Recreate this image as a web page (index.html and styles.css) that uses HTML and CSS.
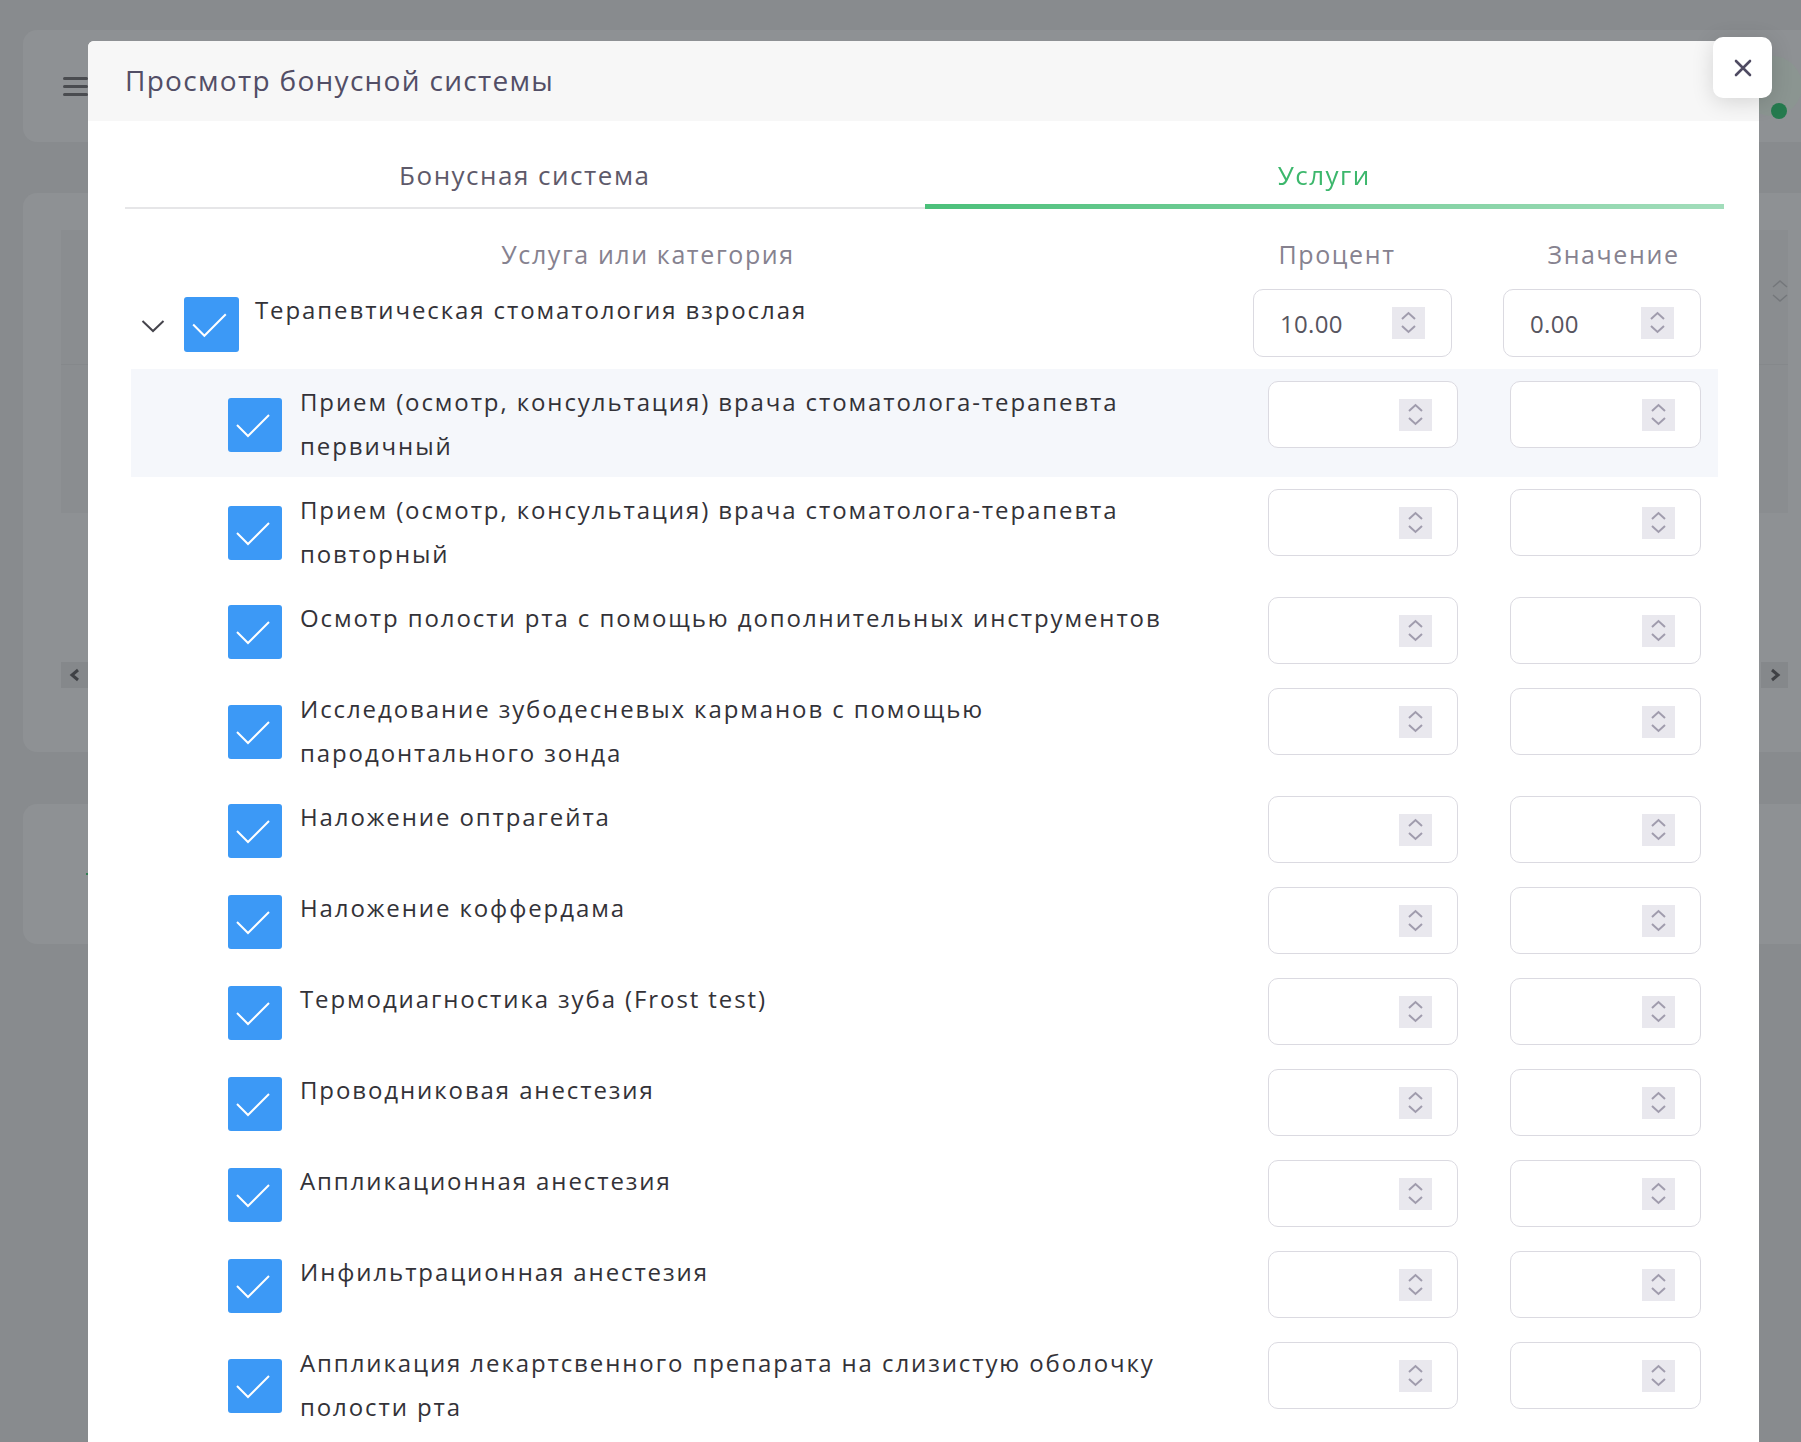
FILE: index.html
```html
<!DOCTYPE html>
<html lang="ru">
<head>
<meta charset="utf-8">
<title>Просмотр бонусной системы</title>
<link rel="stylesheet" href="styles.css">
</head>
<body>
<div class="page">
  <header class="app-bar">
    <span class="burger"><i></i><i></i><i></i></span>
    <span class="avatar"><span class="avatar-dot"></span></span>
  </header>
  <section class="card card-main">
    <div class="bg-table">
      <div class="bg-table-head">
        <svg class="bg-sort" width="16" height="30" viewBox="0 0 16 30"><path d="M1 11 L8 5 L15 11 M1 19 L8 25 L15 19" stroke="#74777b" stroke-width="1.5" fill="none"/></svg>
      </div>
      <div class="bg-table-row"></div>
    </div>
    <div class="bg-pager">
      <span class="pager-btn"><svg width="12" height="14" viewBox="0 0 12 14"><path d="M9 2 L3 7 L9 12" stroke="#3f4145" stroke-width="3" fill="none"/></svg></span>
      <span class="pager-btn"><svg width="12" height="14" viewBox="0 0 12 14"><path d="M3 2 L9 7 L3 12" stroke="#3f4145" stroke-width="3" fill="none"/></svg></span>
    </div>
  </section>
  <section class="card card-small"><span class="bg-mark"></span></section>
</div>

<div class="modal">
  <div class="modal-head">
    <h2 class="modal-title">Просмотр бонусной системы</h2>
  </div>
  <button class="modal-close" type="button" aria-label="Закрыть">
    <svg width="18" height="18" viewBox="0 0 18 18"><path d="M2 2 L16 16 M16 2 L2 16" stroke="#4f4b62" stroke-width="2.6" stroke-linecap="round" fill="none"/></svg>
  </button>
  <div class="modal-body">
    <nav class="tabs">
      <div class="tab">Бонусная система</div>
      <div class="tab tab-active">Услуги</div>
    </nav>

    <div class="svc-table">
      <div class="svc-head">
        <div class="head-name">Услуга или категория</div>
        <div class="head-pct">Процент</div>
        <div class="head-val">Значение</div>
      </div>

      <div class="row row-parent">
        <span class="expander">
          <svg width="24" height="14" viewBox="0 0 24 14"><path d="M1.5 2 L12 12 L22.5 2" stroke="#45444c" stroke-width="2" fill="none"/></svg>
        </span>
        <span class="check"><svg width="55" height="55" viewBox="0 0 54 54"><path d="M9 27 L20 38 L41 17" stroke="#fff" stroke-width="2" fill="none"/></svg></span>
        <div class="name">Терапевтическая стоматология взрослая</div>
        <div class="inputs">
          <div class="num num-p"><span class="num-val">10.00</span><span class="spin"><svg width="33" height="32" viewBox="0 0 33 32"><path d="M10 12 L16.5 6 L23 12 M10 19 L16.5 25 L23 19" stroke="#a09cad" stroke-width="2" fill="none"/></svg></span></div>
          <div class="num num-p"><span class="num-val">0.00</span><span class="spin"><svg width="33" height="32" viewBox="0 0 33 32"><path d="M10 12 L16.5 6 L23 12 M10 19 L16.5 25 L23 19" stroke="#a09cad" stroke-width="2" fill="none"/></svg></span></div>
        </div>
      </div>

      <div class="row row-child row-hover">
        <span class="check"><svg width="54" height="54" viewBox="0 0 54 54"><path d="M9 27 L20 38 L41 17" stroke="#fff" stroke-width="2" fill="none"/></svg></span>
        <div class="name">Прием (осмотр, консультация) врача стоматолога-терапевта первичный</div>
        <div class="inputs">
          <div class="num num-c"><span class="num-val"></span><span class="spin"><svg width="33" height="32" viewBox="0 0 33 32"><path d="M10 12 L16.5 6 L23 12 M10 19 L16.5 25 L23 19" stroke="#a09cad" stroke-width="2" fill="none"/></svg></span></div>
          <div class="num num-c num-c2"><span class="num-val"></span><span class="spin"><svg width="33" height="32" viewBox="0 0 33 32"><path d="M10 12 L16.5 6 L23 12 M10 19 L16.5 25 L23 19" stroke="#a09cad" stroke-width="2" fill="none"/></svg></span></div>
        </div>
      </div>

      <div class="row row-child">
        <span class="check"><svg width="54" height="54" viewBox="0 0 54 54"><path d="M9 27 L20 38 L41 17" stroke="#fff" stroke-width="2" fill="none"/></svg></span>
        <div class="name">Прием (осмотр, консультация) врача стоматолога-терапевта повторный</div>
        <div class="inputs">
          <div class="num num-c"><span class="num-val"></span><span class="spin"><svg width="33" height="32" viewBox="0 0 33 32"><path d="M10 12 L16.5 6 L23 12 M10 19 L16.5 25 L23 19" stroke="#a09cad" stroke-width="2" fill="none"/></svg></span></div>
          <div class="num num-c num-c2"><span class="num-val"></span><span class="spin"><svg width="33" height="32" viewBox="0 0 33 32"><path d="M10 12 L16.5 6 L23 12 M10 19 L16.5 25 L23 19" stroke="#a09cad" stroke-width="2" fill="none"/></svg></span></div>
        </div>
      </div>

      <div class="row row-child">
        <span class="check"><svg width="54" height="54" viewBox="0 0 54 54"><path d="M9 27 L20 38 L41 17" stroke="#fff" stroke-width="2" fill="none"/></svg></span>
        <div class="name">Осмотр полости рта с помощью дополнительных инструментов</div>
        <div class="inputs">
          <div class="num num-c"><span class="num-val"></span><span class="spin"><svg width="33" height="32" viewBox="0 0 33 32"><path d="M10 12 L16.5 6 L23 12 M10 19 L16.5 25 L23 19" stroke="#a09cad" stroke-width="2" fill="none"/></svg></span></div>
          <div class="num num-c num-c2"><span class="num-val"></span><span class="spin"><svg width="33" height="32" viewBox="0 0 33 32"><path d="M10 12 L16.5 6 L23 12 M10 19 L16.5 25 L23 19" stroke="#a09cad" stroke-width="2" fill="none"/></svg></span></div>
        </div>
      </div>

      <div class="row row-child">
        <span class="check"><svg width="54" height="54" viewBox="0 0 54 54"><path d="M9 27 L20 38 L41 17" stroke="#fff" stroke-width="2" fill="none"/></svg></span>
        <div class="name">Исследование зубодесневых карманов с помощью пародонтального зонда</div>
        <div class="inputs">
          <div class="num num-c"><span class="num-val"></span><span class="spin"><svg width="33" height="32" viewBox="0 0 33 32"><path d="M10 12 L16.5 6 L23 12 M10 19 L16.5 25 L23 19" stroke="#a09cad" stroke-width="2" fill="none"/></svg></span></div>
          <div class="num num-c num-c2"><span class="num-val"></span><span class="spin"><svg width="33" height="32" viewBox="0 0 33 32"><path d="M10 12 L16.5 6 L23 12 M10 19 L16.5 25 L23 19" stroke="#a09cad" stroke-width="2" fill="none"/></svg></span></div>
        </div>
      </div>

      <div class="row row-child">
        <span class="check"><svg width="54" height="54" viewBox="0 0 54 54"><path d="M9 27 L20 38 L41 17" stroke="#fff" stroke-width="2" fill="none"/></svg></span>
        <div class="name">Наложение оптрагейта</div>
        <div class="inputs">
          <div class="num num-c"><span class="num-val"></span><span class="spin"><svg width="33" height="32" viewBox="0 0 33 32"><path d="M10 12 L16.5 6 L23 12 M10 19 L16.5 25 L23 19" stroke="#a09cad" stroke-width="2" fill="none"/></svg></span></div>
          <div class="num num-c num-c2"><span class="num-val"></span><span class="spin"><svg width="33" height="32" viewBox="0 0 33 32"><path d="M10 12 L16.5 6 L23 12 M10 19 L16.5 25 L23 19" stroke="#a09cad" stroke-width="2" fill="none"/></svg></span></div>
        </div>
      </div>

      <div class="row row-child">
        <span class="check"><svg width="54" height="54" viewBox="0 0 54 54"><path d="M9 27 L20 38 L41 17" stroke="#fff" stroke-width="2" fill="none"/></svg></span>
        <div class="name">Наложение коффердама</div>
        <div class="inputs">
          <div class="num num-c"><span class="num-val"></span><span class="spin"><svg width="33" height="32" viewBox="0 0 33 32"><path d="M10 12 L16.5 6 L23 12 M10 19 L16.5 25 L23 19" stroke="#a09cad" stroke-width="2" fill="none"/></svg></span></div>
          <div class="num num-c num-c2"><span class="num-val"></span><span class="spin"><svg width="33" height="32" viewBox="0 0 33 32"><path d="M10 12 L16.5 6 L23 12 M10 19 L16.5 25 L23 19" stroke="#a09cad" stroke-width="2" fill="none"/></svg></span></div>
        </div>
      </div>

      <div class="row row-child">
        <span class="check"><svg width="54" height="54" viewBox="0 0 54 54"><path d="M9 27 L20 38 L41 17" stroke="#fff" stroke-width="2" fill="none"/></svg></span>
        <div class="name">Термодиагностика зуба (Frost test)</div>
        <div class="inputs">
          <div class="num num-c"><span class="num-val"></span><span class="spin"><svg width="33" height="32" viewBox="0 0 33 32"><path d="M10 12 L16.5 6 L23 12 M10 19 L16.5 25 L23 19" stroke="#a09cad" stroke-width="2" fill="none"/></svg></span></div>
          <div class="num num-c num-c2"><span class="num-val"></span><span class="spin"><svg width="33" height="32" viewBox="0 0 33 32"><path d="M10 12 L16.5 6 L23 12 M10 19 L16.5 25 L23 19" stroke="#a09cad" stroke-width="2" fill="none"/></svg></span></div>
        </div>
      </div>

      <div class="row row-child">
        <span class="check"><svg width="54" height="54" viewBox="0 0 54 54"><path d="M9 27 L20 38 L41 17" stroke="#fff" stroke-width="2" fill="none"/></svg></span>
        <div class="name">Проводниковая анестезия</div>
        <div class="inputs">
          <div class="num num-c"><span class="num-val"></span><span class="spin"><svg width="33" height="32" viewBox="0 0 33 32"><path d="M10 12 L16.5 6 L23 12 M10 19 L16.5 25 L23 19" stroke="#a09cad" stroke-width="2" fill="none"/></svg></span></div>
          <div class="num num-c num-c2"><span class="num-val"></span><span class="spin"><svg width="33" height="32" viewBox="0 0 33 32"><path d="M10 12 L16.5 6 L23 12 M10 19 L16.5 25 L23 19" stroke="#a09cad" stroke-width="2" fill="none"/></svg></span></div>
        </div>
      </div>

      <div class="row row-child">
        <span class="check"><svg width="54" height="54" viewBox="0 0 54 54"><path d="M9 27 L20 38 L41 17" stroke="#fff" stroke-width="2" fill="none"/></svg></span>
        <div class="name">Аппликационная анестезия</div>
        <div class="inputs">
          <div class="num num-c"><span class="num-val"></span><span class="spin"><svg width="33" height="32" viewBox="0 0 33 32"><path d="M10 12 L16.5 6 L23 12 M10 19 L16.5 25 L23 19" stroke="#a09cad" stroke-width="2" fill="none"/></svg></span></div>
          <div class="num num-c num-c2"><span class="num-val"></span><span class="spin"><svg width="33" height="32" viewBox="0 0 33 32"><path d="M10 12 L16.5 6 L23 12 M10 19 L16.5 25 L23 19" stroke="#a09cad" stroke-width="2" fill="none"/></svg></span></div>
        </div>
      </div>

      <div class="row row-child">
        <span class="check"><svg width="54" height="54" viewBox="0 0 54 54"><path d="M9 27 L20 38 L41 17" stroke="#fff" stroke-width="2" fill="none"/></svg></span>
        <div class="name">Инфильтрационная анестезия</div>
        <div class="inputs">
          <div class="num num-c"><span class="num-val"></span><span class="spin"><svg width="33" height="32" viewBox="0 0 33 32"><path d="M10 12 L16.5 6 L23 12 M10 19 L16.5 25 L23 19" stroke="#a09cad" stroke-width="2" fill="none"/></svg></span></div>
          <div class="num num-c num-c2"><span class="num-val"></span><span class="spin"><svg width="33" height="32" viewBox="0 0 33 32"><path d="M10 12 L16.5 6 L23 12 M10 19 L16.5 25 L23 19" stroke="#a09cad" stroke-width="2" fill="none"/></svg></span></div>
        </div>
      </div>

      <div class="row row-child">
        <span class="check"><svg width="54" height="54" viewBox="0 0 54 54"><path d="M9 27 L20 38 L41 17" stroke="#fff" stroke-width="2" fill="none"/></svg></span>
        <div class="name">Аппликация лекартсвенного препарата на слизистую оболочку полости рта</div>
        <div class="inputs">
          <div class="num num-c"><span class="num-val"></span><span class="spin"><svg width="33" height="32" viewBox="0 0 33 32"><path d="M10 12 L16.5 6 L23 12 M10 19 L16.5 25 L23 19" stroke="#a09cad" stroke-width="2" fill="none"/></svg></span></div>
          <div class="num num-c num-c2"><span class="num-val"></span><span class="spin"><svg width="33" height="32" viewBox="0 0 33 32"><path d="M10 12 L16.5 6 L23 12 M10 19 L16.5 25 L23 19" stroke="#a09cad" stroke-width="2" fill="none"/></svg></span></div>
        </div>
      </div>
    </div>
  </div>
</div>
</body>
</html>
```

FILE: styles.css
```css
* { box-sizing: border-box; }

html, body {
  margin: 0;
  padding: 0;
  height: 100%;
  overflow: hidden;
}

body {
  background: #888b8e;
  font-family: "Open Sans", "Noto Sans", sans-serif;
  color: #333238;
}

/* ---------- page behind the overlay (already dimmed) ---------- */
.page {
  padding: 30px 0 0 23px;
  width: 1860px;
}

.app-bar {
  height: 112px;
  border-radius: 14px;
  background: #8e9194;
  display: flex;
  align-items: center;
  padding-left: 40px;
}

.burger {
  display: flex;
  flex-direction: column;
  gap: 5px;
  width: 25px;
}
.burger i {
  display: block;
  height: 3px;
  border-radius: 2px;
  background: #4a4c50;
}

.avatar {
  margin-left: 1654px;
  width: 60px;
  height: 60px;
  border-radius: 50%;
  background: #8b9591;
  position: relative;
}
.avatar-dot {
  position: absolute;
  left: 29px;
  top: 47px;
  width: 16px;
  height: 16px;
  border-radius: 50%;
  background: #257a4e;
}

.card {
  border-radius: 14px;
  background: #8e9194;
  width: 1803px;
}

.card-main {
  margin-top: 51px;
  height: 559px;
  padding: 37px 38px 0 38px;
}

.bg-table {
  height: 283px;
  background: #8a8d90;
}
.bg-table-head {
  height: 135px;
  border-bottom: 1px solid #85888b;
  display: flex;
  justify-content: flex-end;
  align-items: flex-start;
  padding: 46px 0 0 0;
}
.bg-sort {
  display: block;
}

.bg-pager {
  display: flex;
  justify-content: space-between;
  margin-top: 149px;
}
.pager-btn {
  width: 27px;
  height: 26px;
  background: #85888b;
  display: flex;
  align-items: center;
  justify-content: center;
}

.card-small {
  margin-top: 52px;
  height: 140px;
  padding: 69px 0 0 63px;
}
.bg-mark {
  display: block;
  width: 8px;
  height: 2px;
  background: #2f7d52;
}

/* ---------- modal ---------- */
.modal {
  position: fixed;
  left: 88px;
  top: 41px;
  width: 1671px;
  height: 1420px;
  background: #fff;
  border-radius: 6px 6px 0 0;
}

.modal-head {
  height: 80px;
  background: #f7f7f7;
  border-radius: 6px 6px 0 0;
  display: flex;
  align-items: center;
  padding: 0 0 3px 37px;
}

.modal-title {
  margin: 0;
  font-weight: 400;
  font-size: 28px;
  letter-spacing: 1.3px;
  color: #524e66;
}

.modal-close {
  position: absolute;
  top: -4px;
  right: -13px;
  width: 59px;
  height: 61px;
  border: none;
  border-radius: 10px;
  background: #fff;
  box-shadow: 0 4px 22px rgba(0, 0, 0, 0.14);
  display: flex;
  align-items: center;
  justify-content: center;
  padding: 0;
}

.modal-body {
  padding: 0 35px 0 37px;
}

.tabs {
  display: flex;
}
.tab {
  flex: 1;
  text-align: center;
  font-size: 26px;
  letter-spacing: 1.5px;
  color: #5e5a6a;
  line-height: 34px;
  padding: 37px 0 15px;
  border-bottom: 2px solid #e6e6e8;
  position: relative;
}
.tab-active {
  color: #3cb76c;
  border-bottom-color: transparent;
}
.tab-active::after {
  content: "";
  position: absolute;
  left: 0;
  right: 0;
  bottom: -2px;
  height: 5px;
  background: linear-gradient(90deg, #4bc07a 0%, #7fd1a0 55%, #a2ddbb 100%);
}

/* ---------- table ---------- */
.svc-table {
  margin: 0 6px;
}

.svc-head {
  display: flex;
  padding: 28px 0 6px;
  line-height: 34px;
  font-size: 25px;
  letter-spacing: 1.6px;
  color: #86828f;
}
.head-name { width: 1034px; text-align: center; }
.head-pct { width: 344px; text-align: center; }
.head-val { flex: 1; text-align: center; }

.row {
  display: flex;
  align-items: flex-start;
  padding: 12px 17px 9px 0;
}

.row-hover {
  background: #f5f7fb;
}

.expander {
  align-self: center;
  width: 26px;
  margin-left: 9px;
  margin-right: 18px;
  display: flex;
  justify-content: center;
  padding-top: 2px;
}

.check {
  align-self: center;
  flex: none;
  width: 54px;
  height: 54px;
  border-radius: 3px;
  background: #3c99f6;
  display: flex;
}
.row-parent .check {
  width: 55px;
  height: 55px;
  margin-right: 16px;
}
.row-child .check {
  margin-left: 97px;
  margin-right: 18px;
}

.name {
  font-size: 24px;
  line-height: 44px;
  margin-top: -1px;
  letter-spacing: 1.9px;
  color: #333238;
  width: 890px;
}

.inputs {
  margin-left: auto;
  margin-bottom: 3px;
  display: flex;
}

.num {
  display: flex;
  align-items: center;
  justify-content: space-between;
  border: 1px solid #dbdae1;
  border-radius: 10px;
  background: #fff;
}
.num-p {
  width: 199px;
  height: 68px;
  padding: 0 26px 0 26px;
}
.num-p + .num-p {
  width: 198px;
  margin-left: 51px;
}
.num-c {
  width: 190px;
  height: 67px;
  padding: 0 25px 0 26px;
}
.num-c2 {
  width: 191px;
  margin-left: 52px;
}

.num-val {
  font-size: 24px;
  letter-spacing: 0.3px;
  color: #57555f;
}

.spin {
  display: flex;
  background: #e9e8ee;
  width: 33px;
  height: 32px;
}
```
